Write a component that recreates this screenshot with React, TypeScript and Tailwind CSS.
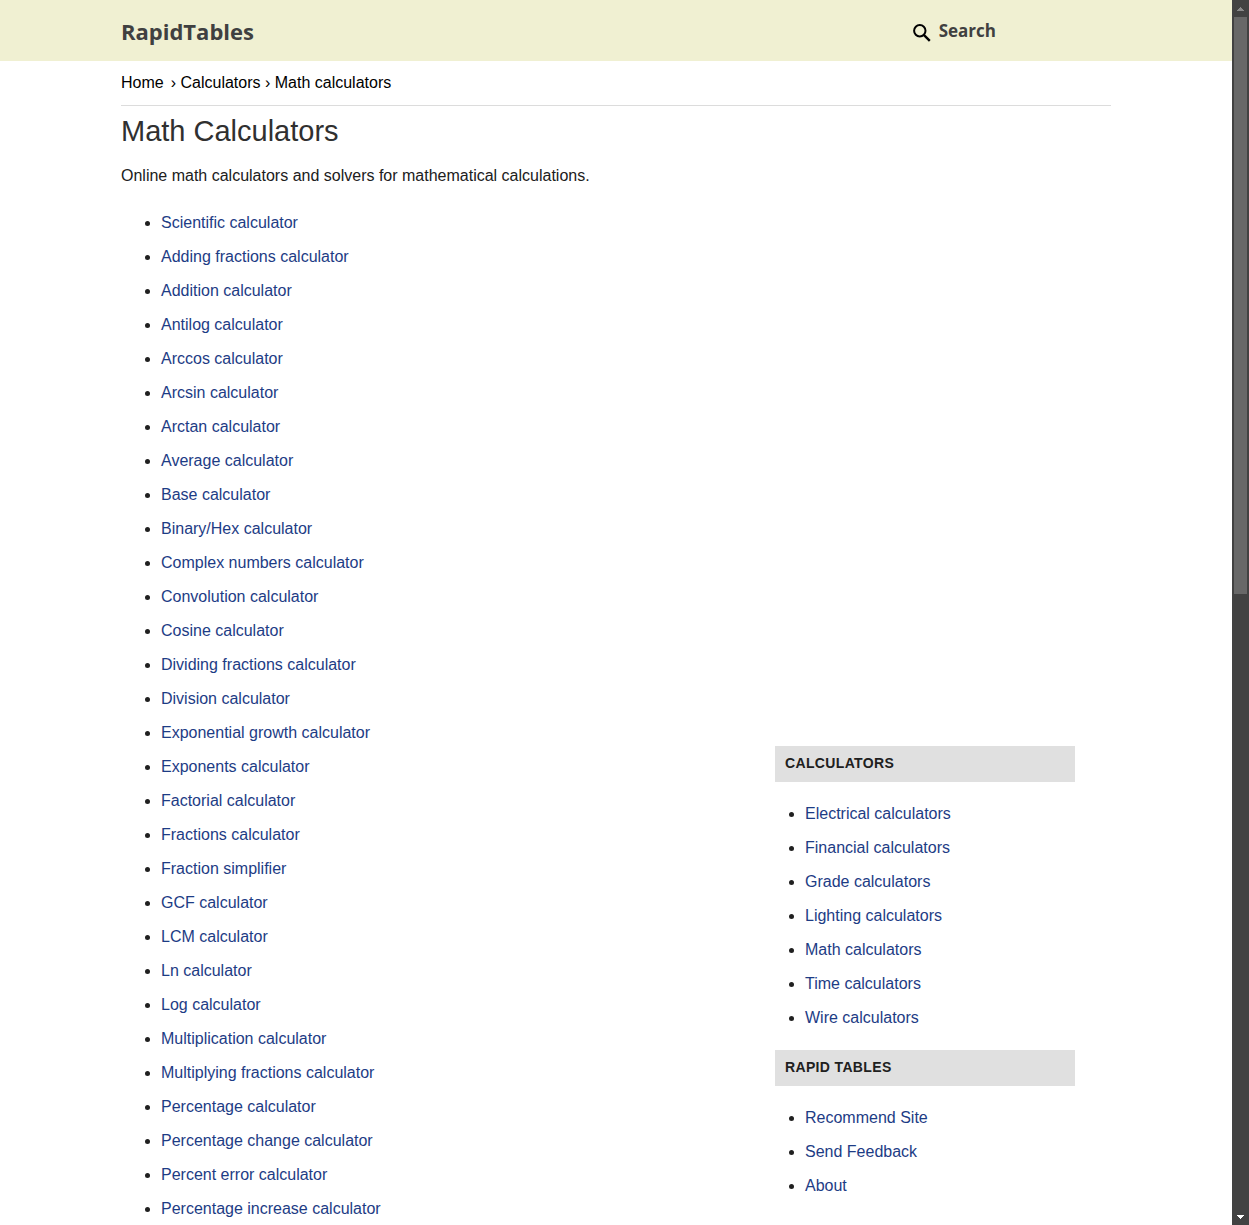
const calculators = [
  "Scientific calculator",
  "Adding fractions calculator",
  "Addition calculator",
  "Antilog calculator",
  "Arccos calculator",
  "Arcsin calculator",
  "Arctan calculator",
  "Average calculator",
  "Base calculator",
  "Binary/Hex calculator",
  "Complex numbers calculator",
  "Convolution calculator",
  "Cosine calculator",
  "Dividing fractions calculator",
  "Division calculator",
  "Exponential growth calculator",
  "Exponents calculator",
  "Factorial calculator",
  "Fractions calculator",
  "Fraction simplifier",
  "GCF calculator",
  "LCM calculator",
  "Ln calculator",
  "Log calculator",
  "Multiplication calculator",
  "Multiplying fractions calculator",
  "Percentage calculator",
  "Percentage change calculator",
  "Percent error calculator",
  "Percentage increase calculator",
];

const categories = [
  "Electrical calculators",
  "Financial calculators",
  "Grade calculators",
  "Lighting calculators",
  "Math calculators",
  "Time calculators",
  "Wire calculators",
];

const siteLinks = ["Recommend Site", "Send Feedback", "About"];

function LinkList({ items }: { items: string[] }) {
  return (
    <ul className="list-disc">
      {items.map((item) => (
        <li key={item} className="leading-[34px]">
          <a href="#" className="text-[#1d3c85] hover:underline">
            {item}
          </a>
        </li>
      ))}
    </ul>
  );
}

function SideSection({ title, items }: { title: string; items: string[] }) {
  return (
    <section>
      <h2 className="bg-[#e0e0e0] px-2.5 pt-2 pb-2.5 text-[14px] leading-[18px] font-bold tracking-wide uppercase">
        {title}
      </h2>
      <div className="py-[15px] pl-[30px]">
        <LinkList items={items} />
      </div>
    </section>
  );
}

function Header() {
  return (
    <header className="bg-[#f0f0d2] font-['Open_Sans','Noto_Sans',sans-serif] text-[#404040]">
      <div className="mx-auto flex h-[61px] max-w-[990px] items-center justify-between">
        <a href="#" className="text-[22px] leading-8 font-bold">
          RapidTables
        </a>
        <a href="#" className="mr-[115px] flex items-center gap-2 text-[17px] leading-7 font-bold">
          <svg width="18" height="18" viewBox="0 0 18 18" fill="none" stroke="#000" aria-hidden="true" className="mt-1">
            <circle cx="6.8" cy="6.8" r="5.7" strokeWidth="2" />
            <path d="M10.8 10.8 16.8 16.8" strokeWidth="2.4" />
          </svg>
          Search
        </a>
      </div>
    </header>
  );
}

function ScrollTrack() {
  return (
    <div aria-hidden="true" className="flex w-[17px] shrink-0 flex-col items-center bg-[#424242]">
      <svg width="17" height="17" viewBox="0 0 17 17" shapeRendering="crispEdges" className="shrink-0">
        <path d="M8 7h1v1h1v1h1v1h1v1H5v-1h1V9h1V8h1z" fill="#8a8a8a" />
      </svg>
      <div className="h-[577px] w-[13px] bg-[#686868]" />
      <svg width="17" height="17" viewBox="0 0 17 17" shapeRendering="crispEdges" className="mt-auto shrink-0">
        <path d="M5 6h7v1h-1v1h-1v1H9v1H8V9H7V8H6V7H5z" fill="#fff" />
      </svg>
    </div>
  );
}

export default function App() {
  return (
    <div className="flex min-h-screen bg-white font-['Liberation_Sans',Arial,sans-serif] text-base text-[#202020]">
      <div className="min-w-0 flex-1">
        <Header />
        <div className="mx-auto max-w-[990px]">
          <nav aria-label="Breadcrumb" className="border-b border-[#dcdcdc] py-2.5 text-black">
            <a href="#">Home</a>
            <span className="ml-[7px]">› </span>
            <a href="#">Calculators</a> › Math calculators
          </nav>
          <div className="flex items-start justify-between">
            <main>
              <h1 className="pt-[7px] text-[29px] leading-9 text-[#303030]">Math Calculators</h1>
              <p className="pt-[15px] leading-6">Online math calculators and solvers for mathematical calculations.</p>
              <div className="pt-[18px] pl-10">
                <LinkList items={calculators} />
              </div>
            </main>
            <aside className="mr-9 w-[300px] pt-[640px]">
              <SideSection title="Calculators" items={categories} />
              <SideSection title="Rapid Tables" items={siteLinks} />
            </aside>
          </div>
        </div>
      </div>
      <ScrollTrack />
    </div>
  );
}
